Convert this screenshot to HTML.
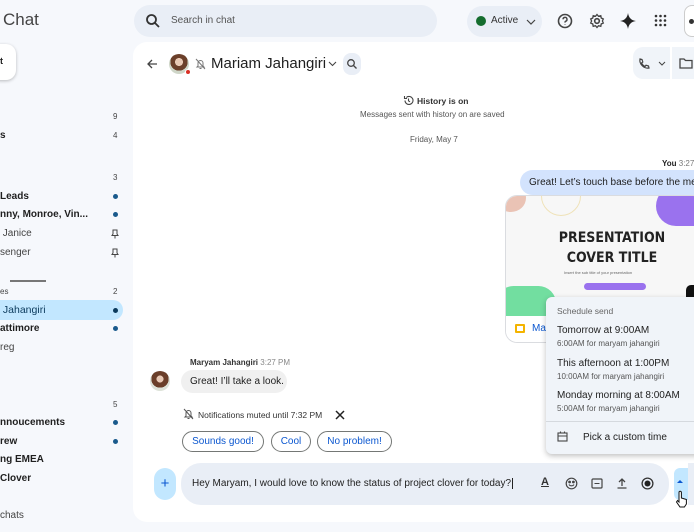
<!DOCTYPE html>
<html><head><style>
*{box-sizing:border-box;margin:0;padding:0}
body{width:694px;height:532px;overflow:hidden;background:#f6f8fc;font-family:"Liberation Sans",sans-serif;color:#1f1f1f;position:relative}
.a{position:absolute;white-space:nowrap}
.sb{font-size:10px}
.b{font-weight:bold}
.dot{width:5px;height:5px;border-radius:50%;background:#1a5a8c}
.num{font-size:8px;color:#444}
.chip{position:absolute;top:431px;height:21px;border:1px solid #747775;border-radius:11px;color:#0b57d0;font-size:10px;line-height:19px;text-align:center;background:#fff;white-space:nowrap}
.ic{position:absolute;stroke:#444;fill:none;stroke-width:1.6}
</style></head><body>
<div class="a" style="left:3px;top:10px;font-size:17px;color:#444">Chat</div>
<div class="a" style="left:-10px;top:44px;width:26px;height:36px;background:#fff;border-radius:10px;box-shadow:0 1px 3px rgba(0,0,0,.25)"></div>
<div class="a sb b" style="left:0;top:56px;font-size:9px">t</div>
<!-- search -->
<div class="a" style="left:134px;top:5px;width:303px;height:32px;background:#e9eef6;border-radius:16px"></div>
<svg class="ic" style="left:145px;top:13px" width="16" height="16"><circle cx="6.5" cy="6.5" r="4.5" stroke="#333" stroke-width="1.8"/><path d="M10 10l4 4" stroke="#333" stroke-width="1.8"/></svg>
<div class="a" style="left:171px;top:15px;font-size:10px;color:#555">Search in chat</div>
<div class="a" style="left:467px;top:6px;width:75px;height:31px;background:#e9eef6;border-radius:16px"></div>
<div class="a" style="left:476px;top:16px;width:10px;height:10px;border-radius:50%;background:#146c2e"></div>
<div class="a" style="left:491px;top:15px;font-size:10px;color:#333">Active</div>
<svg class="ic" style="left:526px;top:18px" width="10" height="8"><path d="M1 2l4 4 4-4" stroke-width="1.2"/></svg>
<svg class="ic" style="left:557px;top:13px" width="16" height="16"><circle cx="8" cy="8" r="6.5"/><path d="M6 6.3a2 2 0 1 1 2.5 2c-.5.2-.5.6-.5 1.3M8 11.5v.5" stroke-width="1.4"/></svg>
<svg class="ic" style="left:589px;top:13px" width="16" height="16"><circle cx="8" cy="8" r="2.3"/><path d="M8 1.5l1.5 1.8 2.3-.6.4 2.3 2.1 1-.9 2 .9 2-2.1 1-.4 2.3-2.3-.6L8 14.5l-1.5-1.8-2.3.6-.4-2.3-2.1-1 .9-2-.9-2 2.1-1 .4-2.3 2.3.6z" stroke-width="1.3"/></svg>
<svg class="a" style="left:620px;top:13px" width="16" height="16"><path d="M8 0C8.7 4.5 11 7.3 16 8 11 8.7 8.7 11.5 8 16 7.3 11.5 5 8.7 0 8 5 7.3 7.3 4.5 8 0z" fill="#222"/></svg>
<svg class="a" style="left:654px;top:14px" width="13" height="13" fill="#333"><circle cx="2" cy="2" r="1.3"/><circle cx="6.5" cy="2" r="1.3"/><circle cx="11" cy="2" r="1.3"/><circle cx="2" cy="6.5" r="1.3"/><circle cx="6.5" cy="6.5" r="1.3"/><circle cx="11" cy="6.5" r="1.3"/><circle cx="2" cy="11" r="1.3"/><circle cx="6.5" cy="11" r="1.3"/><circle cx="11" cy="11" r="1.3"/></svg>
<div class="a" style="left:684px;top:5px;width:20px;height:32px;border:1px solid #ccc;border-radius:8px;background:#fff"></div>
<div class="a" style="left:689px;top:19px;width:5px;height:5px;border-radius:50%;background:#333"></div>

<!-- sidebar list -->
<div class="a num" style="left:113px;top:112px">9</div>
<div class="a sb b" style="left:0;top:130px">s</div><div class="a num" style="left:113px;top:131px">4</div>
<div class="a num" style="left:113px;top:173px">3</div>
<div class="a sb b" style="left:0;top:191px">Leads</div><div class="a dot" style="left:113px;top:194px"></div>
<div class="a sb b" style="left:0;top:209px">nny, Monroe, Vin...</div><div class="a dot" style="left:113px;top:212px"></div>
<div class="a sb" style="left:0;top:228px;color:#444">&nbsp;Janice</div>
<svg class="ic" style="left:111px;top:229px" width="8" height="10"><path d="M2 1h4v4l1 1.5H1L2 5zM4 6.5V9.5" stroke-width="1"/></svg>
<div class="a sb" style="left:0;top:247px;color:#444">senger</div>
<svg class="ic" style="left:111px;top:248px" width="8" height="10"><path d="M2 1h4v4l1 1.5H1L2 5zM4 6.5V9.5" stroke-width="1"/></svg>
<div class="a" style="left:10px;top:280px;width:36px;height:2px;background:#777"></div>
<div class="a num" style="left:0;top:287px">es</div><div class="a num" style="left:113px;top:287px">2</div>
<div class="a" style="left:-10px;top:300px;width:133px;height:20px;background:#c2e7ff;border-radius:10px"></div>
<div class="a sb" style="left:0;top:304px;color:#0b3a5c;font-size:10.5px">&nbsp;Jahangiri</div><div class="a dot" style="left:113px;top:308px;background:#0b3a5c"></div>
<div class="a sb b" style="left:0;top:323px">attimore</div><div class="a dot" style="left:113px;top:326px"></div>
<div class="a sb" style="left:0;top:342px;color:#444">reg</div>
<div class="a num" style="left:113px;top:400px">5</div>
<div class="a sb b" style="left:0;top:417px">nnoucements</div><div class="a dot" style="left:113px;top:420px"></div>
<div class="a sb b" style="left:0;top:436px">rew</div><div class="a dot" style="left:113px;top:439px"></div>
<div class="a sb b" style="left:0;top:454px">ng EMEA</div>
<div class="a sb b" style="left:0;top:473px">Clover</div>
<div class="a sb" style="left:0;top:510px;color:#444">chats</div>

<!-- main panel -->
<div class="a" style="left:133px;top:42px;width:580px;height:480px;background:#fff;border-radius:14px"></div>
<svg class="ic" style="left:146px;top:58px" width="12" height="12"><path d="M11 6H2M6 2L2 6l4 4" stroke-width="1.3"/></svg>
<div class="a" style="left:169px;top:54px;width:20px;height:20px;border-radius:50%;background:radial-gradient(circle at 50% 40%,#e8c9b5 0 25%,#6b3f2a 26% 55%,#cfd6c8 56%)"></div>
<div class="a" style="left:185px;top:69px;width:6px;height:6px;border-radius:50%;background:#d93025;border:1px solid #fff"></div>
<svg class="ic" style="left:195px;top:58px" width="11" height="12"><path d="M3 8V5a2.5 2.5 0 0 1 5 0v3l1 1H2zM4.5 10.5h2M1 1l9 10" stroke="#777" stroke-width="1"/></svg>
<div class="a" style="left:211px;top:55px;font-size:15px;color:#1f1f1f">Mariam Jahangiri</div>
<svg class="ic" style="left:328px;top:61px" width="9" height="7"><path d="M1 1l3.5 3.5L8 1" stroke-width="1.1"/></svg>
<div class="a" style="left:343px;top:53px;width:18px;height:22px;background:#e9eef6;border-radius:8px"></div>
<svg class="ic" style="left:346px;top:58px" width="12" height="12"><circle cx="5" cy="5" r="3.3" stroke-width="1.3"/><path d="M7.5 7.5l3 3" stroke-width="1.3"/></svg>
<div class="a" style="left:633px;top:47px;width:96px;height:32px;background:#f0f4f9;border-radius:10px"></div>
<div class="a" style="left:670px;top:47px;width:2px;height:32px;background:#fff"></div>
<svg class="ic" style="left:637px;top:57px" width="14" height="14"><path d="M3 2l2 .5.8 2.5-1.3 1a7 7 0 0 0 3.5 3.5l1-1.3 2.5.8.5 2c-5 1-10-4-9-9z" stroke-width="1.2"/></svg>
<svg class="ic" style="left:658px;top:61px" width="8" height="6"><path d="M1 1l3 3 3-3" stroke-width="1"/></svg>
<svg class="ic" style="left:679px;top:57px" width="14" height="13"><path d="M1 2h4l1.5 1.5H13V11H1z" stroke-width="1.3"/></svg>

<svg class="ic" style="left:403px;top:95px" width="11" height="11"><path d="M2 5.5a4 4 0 1 0 1.3-3M1.5 1v2.5H4M5.5 3.5v2.3l1.5 1" stroke-width="1.1"/></svg>
<div class="a b" style="left:417px;top:96px;font-size:8.5px;color:#333">History is on</div>
<div class="a" style="left:360px;top:110px;font-size:8px;color:#555">Messages sent with history on are saved</div>
<div class="a" style="left:410px;top:135px;font-size:8px;color:#555">Friday, May 7</div>

<div class="a" style="left:662px;top:159px;font-size:8px"><b>You</b> <span style="color:#777">3:27</span></div>
<div class="a" style="left:520px;top:170px;width:200px;height:25px;background:#d3e3fd;border-radius:13px;font-size:10px;line-height:25px;padding-left:9px">Great! Let’s touch base before the meeting</div>
<!-- presentation card -->
<div class="a" style="left:505px;top:195px;width:200px;height:148px;border:1px solid #dadce0;border-radius:12px;background:#fff;overflow:hidden">
 <div class="a" style="left:0;top:0;width:200px;height:120px;background:#f7f7f7"></div>
 <div class="a" style="left:-10px;top:-12px;width:30px;height:28px;border-radius:50%;background:#eac3b5"></div>
 <div class="a" style="left:35px;top:-20px;width:40px;height:40px;border-radius:50%;border:1px solid #efe2b8"></div>
 <div class="a" style="left:150px;top:-10px;width:60px;height:40px;border-radius:20px;background:#9a72ee"></div>
 <div class="a" style="left:-10px;top:90px;width:60px;height:35px;border-radius:18px;background:#72dea0"></div>
 <div class="a b" style="left:50px;top:32px;width:112px;text-align:center;font-size:14px;line-height:20px;color:#222;font-family:'DejaVu Sans Condensed','Liberation Sans Narrow',sans-serif">PRESENTATION<br>COVER TITLE</div>
 <div class="a" style="left:58px;top:74px;font-size:4px;color:#666">Insert the sub title of your presentation</div>
 <div class="a" style="left:78px;top:87px;width:62px;height:7px;border-radius:4px;background:#9a72ee"></div>
 <div class="a" style="left:0;top:120px;width:200px;height:28px;background:#fff"></div>
 <div class="a" style="left:9px;top:128px;width:10px;height:9px;border:2px solid #f4b400;border-radius:1px"></div>
 <div class="a" style="left:26px;top:127px;font-size:10px;color:#0b57d0">Ma</div>
</div>
<div class="a" style="left:686px;top:285px;width:10px;height:14px;background:#111;border-radius:5px 0 0 0"></div>
<!-- schedule menu -->
<div class="a" style="left:546px;top:297px;width:160px;height:157px;background:#f0f4f9;border-radius:6px 0 0 6px;box-shadow:0 2px 6px rgba(0,0,0,.25)">
 <div class="a" style="left:11px;top:9px;font-size:8.5px;color:#666">Schedule send</div>
 <div class="a" style="left:11px;top:28px;font-size:10px;color:#222">Tomorrow at 9:00AM</div>
 <div class="a" style="left:11px;top:42px;font-size:8px;color:#555">6:00AM for maryam jahangiri</div>
 <div class="a" style="left:11px;top:61px;font-size:10px;color:#222">This afternoon at 1:00PM</div>
 <div class="a" style="left:11px;top:75px;font-size:8px;color:#555">10:00AM for maryam jahangiri</div>
 <div class="a" style="left:11px;top:93px;font-size:10px;color:#222">Monday morning at 8:00AM</div>
 <div class="a" style="left:11px;top:107px;font-size:8px;color:#555">5:00AM for maryam jahangiri</div>
 <div class="a" style="left:0;top:124px;width:160px;height:1px;background:#d5d9de"></div>
 <svg class="ic" style="left:11px;top:134px" width="11" height="11"><rect x="1" y="2" width="9" height="8" stroke-width="1.1"/><path d="M1 5h9M3.5 .5v2M7.5 .5v2" stroke-width="1.1"/></svg>
 <div class="a" style="left:37px;top:135px;font-size:10px;color:#222">Pick a custom time</div>
</div>

<!-- incoming -->
<div class="a" style="left:150px;top:371px;width:20px;height:20px;border-radius:50%;background:radial-gradient(circle at 50% 40%,#e8c9b5 0 22%,#6b3f2a 23% 55%,#dde2d8 56%)"></div>
<div class="a" style="left:190px;top:358px;font-size:8px"><b style="color:#333">Maryam Jahangiri</b> <span style="color:#888">3:27 PM</span></div>
<div class="a" style="left:181px;top:370px;width:106px;height:23px;background:#f0f0f0;border-radius:12px;font-size:10px;line-height:23px;padding-left:9px">Great! I’ll take a look.</div>
<svg class="ic" style="left:183px;top:408px" width="11" height="12"><path d="M3 8V5a2.5 2.5 0 0 1 5 0v3l1 1H2zM4.5 10.5h2M1 1l9 10" stroke="#555" stroke-width="1"/></svg>
<div class="a" style="left:198px;top:410px;font-size:8.5px;color:#333">Notifications muted until 7:32 PM</div>
<svg class="ic" style="left:334px;top:409px" width="12" height="12"><path d="M2 2l8 8M10 2l-8 8" stroke="#222" stroke-width="1.5"/></svg>
<div class="chip" style="left:182px;width:82px">Sounds good!</div>
<div class="chip" style="left:271px;width:40px">Cool</div>
<div class="chip" style="left:317px;width:75px">No problem!</div>

<!-- composer -->
<div class="a" style="left:154px;top:468px;width:22px;height:32px;background:#c2e7ff;border-radius:11px;text-align:center;line-height:31px;color:#0b57d0;font-size:15px">+</div>
<div class="a" style="left:181px;top:463px;width:488px;height:42px;background:#e9eef6;border-radius:20px"></div>
<div class="a" style="left:192px;top:478px;font-size:10px;color:#222">Hey Maryam, I would love to know the status of project clover for today?<span style="border-left:1px solid #222;margin-left:1px"></span></div>
<div class="a" style="left:541px;top:476px;font-size:11px;color:#333;text-decoration:underline;font-weight:bold">A</div>
<svg class="ic" style="left:565px;top:477px" width="13" height="13"><circle cx="6.5" cy="6.5" r="5.3" stroke-width="1.2"/><path d="M4 7.5a3 3 0 0 0 5 0" stroke-width="1.1"/><circle cx="4.6" cy="5" r=".6" fill="#444"/><circle cx="8.4" cy="5" r=".6" fill="#444"/></svg>
<svg class="ic" style="left:591px;top:478px" width="12" height="11"><rect x="1" y="1" width="10" height="9" rx="1" stroke-width="1.2"/><path d="M3.5 5.5h5" stroke-width="1"/></svg>
<svg class="ic" style="left:616px;top:477px" width="12" height="12"><path d="M6 9V2M3 5l3-3 3 3M1.5 11h9" stroke-width="1.3"/></svg>
<svg class="a" style="left:641px;top:477px" width="13" height="13"><circle cx="6.5" cy="6.5" r="5.4" fill="none" stroke="#333" stroke-width="1.3"/><circle cx="6.5" cy="6.5" r="3" fill="#222"/></svg>
<div class="a" style="left:674px;top:468px;width:14px;height:32px;background:#c2e7ff;border-radius:6px 0 0 6px"></div>
<div class="a" style="left:677px;top:480px;width:0;height:0;border-left:3px solid transparent;border-right:3px solid transparent;border-bottom:3px solid #0b57d0"></div>
<div class="a" style="left:688px;top:463px;width:10px;height:42px;background:#e9eef6"></div>
<svg class="a" style="left:675px;top:490px" width="14" height="18"><path d="M4 9V2.5a1.2 1.2 0 0 1 2.4 0V8l5 1.5V14l-2 3H5L1.5 12l1-1.5L4 12z" fill="#fff" stroke="#111" stroke-width="1"/></svg>
</body></html>
